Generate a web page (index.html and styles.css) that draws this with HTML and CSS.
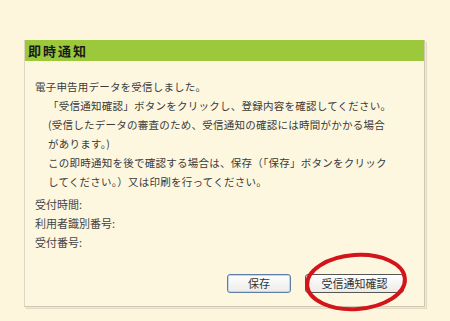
FILE: index.html
```html
<!DOCTYPE html>
<html lang="ja">
<head>
  <meta charset="UTF-8" />
  <title>即時通知</title>
  <link rel="stylesheet" href="styles.css">
</head>
<body>
  <section class="notice">
    <h1 class="notice-title">即時通知</h1>
    <div class="notice-body">
      <p class="lead">電子申告用データを受信しました。</p>
      <p class="line">「受信通知確認」ボタンをクリックし、登録内容を確認してください。</p>
      <p class="line">(受信したデータの審査のため、受信通知の確認には時間がかかる場合</p>
      <p class="line">があります。)</p>
      <p class="line">この即時通知を後で確認する場合は、保存（「保存」ボタンをクリック</p>
      <p class="line">してください。）又は印刷を行ってください。</p>

      <dl class="info">
        <dt>受付時間:</dt>
        <dt>利用者識別番号:</dt>
        <dt>受付番号:</dt>
      </dl>

      <div class="actions">
        <button class="btn btn-save">保存</button>
        <span class="mark">
          <button class="btn btn-confirm">受信通知確認</button>
          <svg class="circle" width="110" height="64" viewBox="0 0 110 64">
            <ellipse cx="55" cy="32" rx="49" ry="27" fill="none" stroke="#d3141b" stroke-width="4" transform="rotate(-4 55 32)" />
          </svg>
        </span>
      </div>
    </div>
  </section>
</body>
</html>
```

FILE: styles.css
```css
html, body {
  margin: 0;
  padding: 0;
  height: 100%;
  background-color: #fdf5dc;
  font-family: "Noto Sans CJK JP", sans-serif;
  color: #333;
  overflow: hidden;
}

.notice {
  margin: 40px 0 0 24px;
  width: 399px;
  height: 266px;
  background-color: #fef7df;
  border-right: 1px solid #cfc8b2;
  border-bottom: 1px solid #cfc8b2;
  border-left: 1px solid #ddd6c0;
  box-shadow: 1px 1px 0 #f0e8d0, 2px 2px 0 #e2dac2;
}

.notice-title {
  margin: 0;
  height: 21px;
  line-height: 21px;
  padding-left: 3px;
  background-color: #9bc93b;
  color: #1a1a1a;
  font-size: 13px;
  font-weight: bold;
  letter-spacing: 2px;
}

.notice-body {
  padding: 16px 20px 0 10px;
}

.notice-body p {
  margin: 0;
  line-height: 19px;
  font-size: 10.5px;
  color: #3a3a3a;
}

.lead {
  letter-spacing: 0.2px;
}

.line {
  padding-left: 13px;
  letter-spacing: 0.25px;
}

.info {
  margin: 4px 0 0;
}

.info dt {
  line-height: 19px;
  font-size: 11px;
  color: #444;
}

.actions {
  margin-top: 22px;
  display: flex;
  justify-content: flex-end;
  align-items: flex-start;
  gap: 14px;
}

.btn {
  display: block;
  font-family: "Noto Sans CJK JP", sans-serif;
  font-size: 11px;
  color: #333;
  height: 19px;
  padding: 0;
  border-radius: 3px;
  background: linear-gradient(#ffffff, #ecebe6);
  line-height: 15px;
}

.btn-save {
  width: 64px;
  border: 1px solid #5f7ea6;
  box-shadow: inset 0 0 0 1px #c4d4ec;
}

.btn-confirm {
  width: 99px;
  border: 1px solid #555;
}

.mark {
  position: relative;
  display: flex;
}

.circle {
  position: absolute;
  left: -4px;
  top: -24px;
  pointer-events: none;
}
```
